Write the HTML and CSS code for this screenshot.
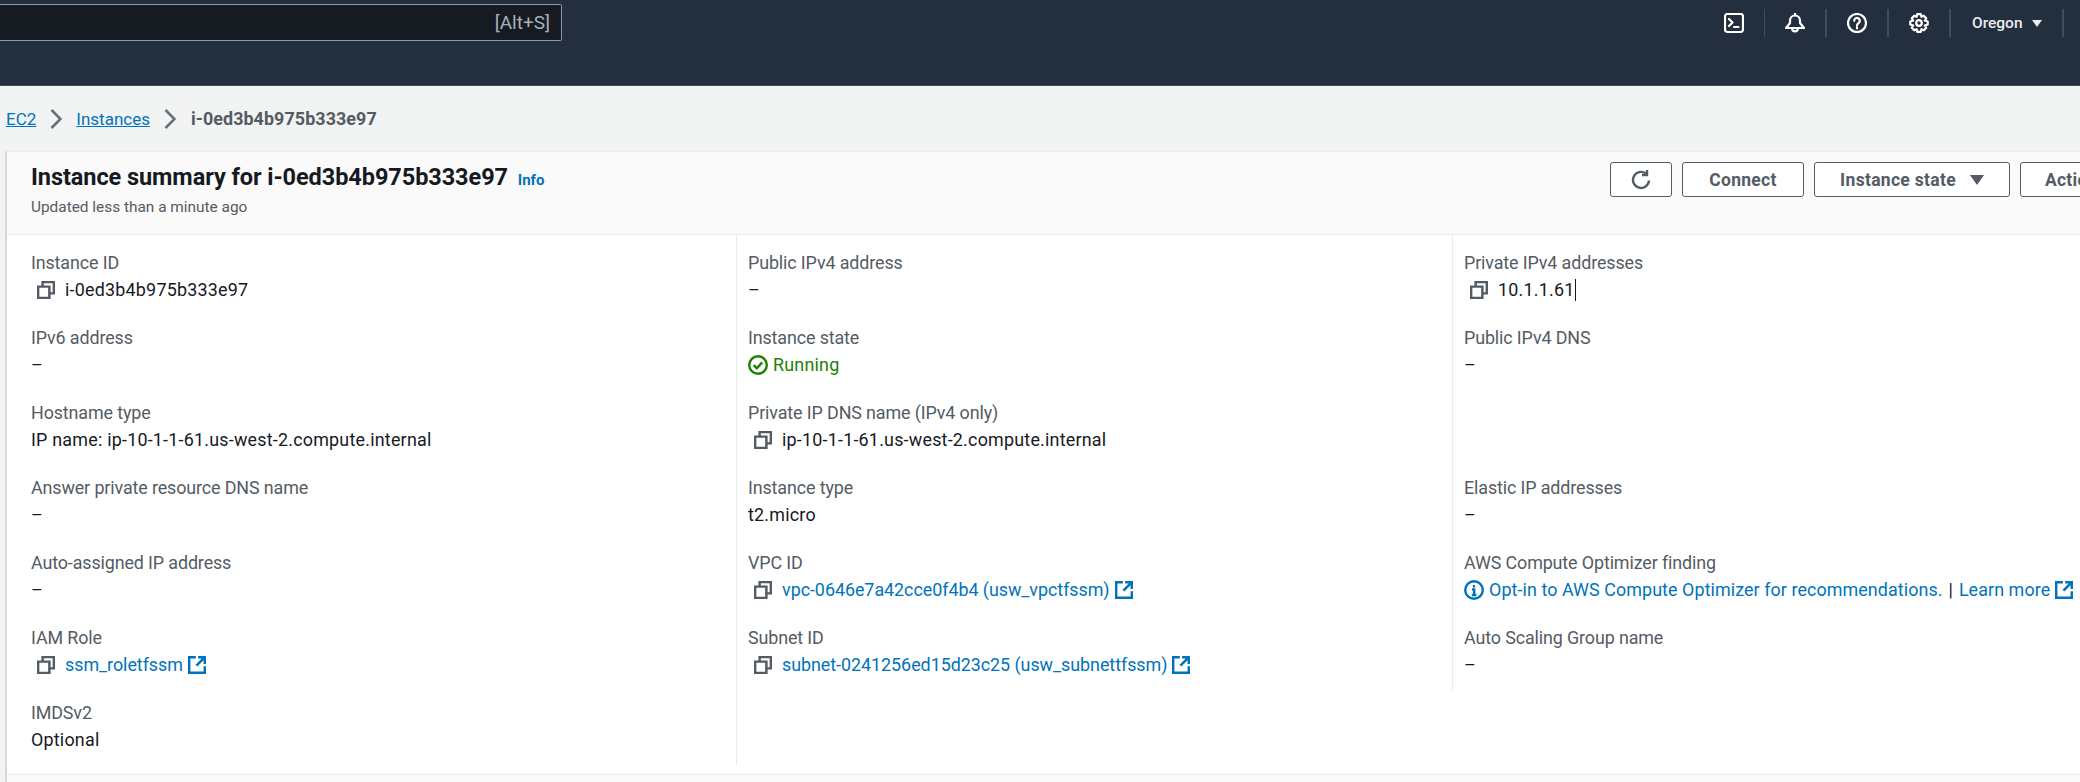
FILE: index.html
```html
<!DOCTYPE html>
<html lang="en">
<head>
<meta charset="UTF-8" />
<title>Instance summary</title>
<link rel="stylesheet" href="styles.css">
</head>
<body>

<header class="topbar">
  <div class="search"><span class="search-key">[Alt+S]</span></div>
  <nav class="topnav">
    <div class="nav-item nav-thin">
      <svg class="nav-icon" viewBox="0 0 20 20"><rect x="1" y="1" width="18" height="18" rx="2.5"/><path d="M5 6l3.5 3.5L5 13M10 14h4.5"/></svg>
    </div>
    <div class="nav-item">
      <svg class="nav-icon" viewBox="0 0 20 20"><path d="M1 15h18l-4-5V7.5a5 5 0 0 0-10 0V10z"/><path d="M10 .8v1.4M7.2 15.5a2.8 2.8 0 0 0 5.6 0"/></svg>
    </div>
    <div class="nav-item">
      <svg class="nav-icon" viewBox="0 0 20 20"><circle cx="10" cy="10" r="9"/><path d="M7.2 7.8a2.8 2.8 0 1 1 4.4 2.3c-1 .7-1.6 1.1-1.6 2.3M10 14.4v1"/></svg>
    </div>
    <div class="nav-item">
      <svg class="nav-icon" viewBox="0 0 20 20"><path d="M8.2 1.2h3.6l.6 2.6 2.4-1.1 2.4 2.6-1.4 2.2 2.9 1v3l-2.9 1 1.4 2.2-2.4 2.6-2.4-1.1-.6 2.6H8.2l-.6-2.6-2.4 1.1-2.4-2.6 1.4-2.2-2.9-1v-3l2.9-1-1.4-2.2 2.4-2.6 2.4 1.1z"/><circle cx="10" cy="10" r="2.8"/></svg>
    </div>
    <div class="nav-item nav-region">Oregon <span class="region-caret"></span></div>
  </nav>
</header>

<div class="crumbs">
  <a href="#">EC2</a>
  <svg class="crumb-sep" viewBox="0 0 12 20"><path d="M1.5 1l9 9-9 9"/></svg>
  <a href="#">Instances</a>
  <svg class="crumb-sep" viewBox="0 0 12 20"><path d="M1.5 1l9 9-9 9"/></svg>
  <span class="crumb-current">i-0ed3b4b975b333e97</span>
</div>

<main class="panel">
  <div class="panel-head">
    <div class="head-text">
      <h1 class="panel-title">Instance summary for i-0ed3b4b975b333e97 <a href="#" class="info">Info</a></h1>
      <div class="updated">Updated less than a minute ago</div>
    </div>
    <div class="actions">
      <button class="btn btn-icon">
        <svg class="refresh" viewBox="0 0 20 20"><path d="M18 10.5a8 8 0 1 1-3.2-7"/><path d="M16 0v5h-5"/></svg>
      </button>
      <button class="btn btn-connect">Connect</button>
      <button class="btn btn-state">Instance state <span class="btn-caret"></span></button>
      <button class="btn btn-actions">Actions</button>
    </div>
  </div>

  <div class="panel-body">
    <section class="col col-first">
      <div class="field">
        <div class="label">Instance ID</div>
        <div class="value copy"><svg class="icon-copy" viewBox="0 0 16 16"><path d="M1 5h10v10H1z"/><path d="M5 5V1h10v10h-4"/></svg>i-0ed3b4b975b333e97</div>
      </div>
      <div class="field">
        <div class="label">IPv6 address</div>
        <div class="value">–</div>
      </div>
      <div class="field">
        <div class="label">Hostname type</div>
        <div class="value">IP name: ip-10-1-1-61.us-west-2.compute.internal</div>
      </div>
      <div class="field">
        <div class="label">Answer private resource DNS name</div>
        <div class="value">–</div>
      </div>
      <div class="field">
        <div class="label">Auto-assigned IP address</div>
        <div class="value">–</div>
      </div>
      <div class="field">
        <div class="label">IAM Role</div>
        <div class="value copy"><svg class="icon-copy" viewBox="0 0 16 16"><path d="M1 5h10v10H1z"/><path d="M5 5V1h10v10h-4"/></svg><a href="#">ssm_roletfssm</a><svg class="icon-ext" viewBox="0 0 16 16"><path d="M7 1H1v14h14V9"/><path d="M9 1h6v6M15 1L7.5 8.5"/></svg></div>
      </div>
      <div class="field">
        <div class="label">IMDSv2</div>
        <div class="value">Optional</div>
      </div>
    </section>

    <section class="col col-second">
      <div class="field">
        <div class="label">Public IPv4 address</div>
        <div class="value">–</div>
      </div>
      <div class="field">
        <div class="label">Instance state</div>
        <div class="value running"><svg class="icon-ok" viewBox="0 0 20 20"><circle cx="10" cy="10" r="8.8"/><path d="M5.8 10.2l3 3 5.4-5.8"/></svg>Running</div>
      </div>
      <div class="field">
        <div class="label">Private IP DNS name (IPv4 only)</div>
        <div class="value copy"><svg class="icon-copy" viewBox="0 0 16 16"><path d="M1 5h10v10H1z"/><path d="M5 5V1h10v10h-4"/></svg>ip-10-1-1-61.us-west-2.compute.internal</div>
      </div>
      <div class="field">
        <div class="label">Instance type</div>
        <div class="value">t2.micro</div>
      </div>
      <div class="field">
        <div class="label">VPC ID</div>
        <div class="value copy"><svg class="icon-copy" viewBox="0 0 16 16"><path d="M1 5h10v10H1z"/><path d="M5 5V1h10v10h-4"/></svg><a href="#">vpc-0646e7a42cce0f4b4 (usw_vpctfssm)</a><svg class="icon-ext" viewBox="0 0 16 16"><path d="M7 1H1v14h14V9"/><path d="M9 1h6v6M15 1L7.5 8.5"/></svg></div>
      </div>
      <div class="field">
        <div class="label">Subnet ID</div>
        <div class="value copy"><svg class="icon-copy" viewBox="0 0 16 16"><path d="M1 5h10v10H1z"/><path d="M5 5V1h10v10h-4"/></svg><a href="#">subnet-0241256ed15d23c25 (usw_subnettfssm)</a><svg class="icon-ext" viewBox="0 0 16 16"><path d="M7 1H1v14h14V9"/><path d="M9 1h6v6M15 1L7.5 8.5"/></svg></div>
      </div>
    </section>

    <section class="col col-third">
      <div class="field">
        <div class="label">Private IPv4 addresses</div>
        <div class="value copy"><svg class="icon-copy" viewBox="0 0 16 16"><path d="M1 5h10v10H1z"/><path d="M5 5V1h10v10h-4"/></svg><span class="text-cursor">10.1.1.61</span></div>
      </div>
      <div class="field">
        <div class="label">Public IPv4 DNS</div>
        <div class="value">–</div>
      </div>
      <div class="field"></div>
      <div class="field">
        <div class="label">Elastic IP addresses</div>
        <div class="value">–</div>
      </div>
      <div class="field">
        <div class="label">AWS Compute Optimizer finding</div>
        <div class="value optimizer"><svg class="icon-info" viewBox="0 0 20 20"><circle cx="10" cy="10" r="8.8"/><path d="M8 9.5h2.2V15M7.8 15h4.6M10 5v2.4"/></svg><a href="#">Opt-in to AWS Compute Optimizer for recommendations.</a> <span class="pipe">|</span> <a href="#">Learn more</a><svg class="icon-ext" viewBox="0 0 16 16"><path d="M7 1H1v14h14V9"/><path d="M9 1h6v6M15 1L7.5 8.5"/></svg></div>
      </div>
      <div class="field">
        <div class="label">Auto Scaling Group name</div>
        <div class="value">–</div>
      </div>
    </section>
  </div>
</main>

</body>
</html>
```

FILE: styles.css
```css
html, body {
  height: 100%;
  overflow: hidden;
}
body {
  margin: 0;
  width: 2080px;
  background: #f2f3f3;
  color: #16191f;
  font-family: "Roboto", "Liberation Sans", sans-serif;
  font-size: 17.9px;
}
a {
  color: #0073bb;
  text-decoration: none;
}

/* top bar */
.topbar {
  display: flex;
  align-items: flex-start;
  height: 85px;
  background: #232f3e;
  border-bottom: 1px solid #414d5c;
}
.search {
  display: flex;
  align-items: center;
  justify-content: flex-end;
  width: 562px;
  height: 37px;
  margin-top: 4px;
  padding-right: 11px;
  box-sizing: border-box;
  background: #161b22;
  border: 1px solid #8d99a8;
  border-left: none;
  border-radius: 0 2px 2px 0;
}
.search-key {
  color: #a6b0bc;
  font-size: 19px;
}
.topnav {
  display: flex;
  align-items: center;
  margin-left: auto;
  margin-top: 9px;
  padding-right: 16px;
}
.nav-item {
  display: flex;
  align-items: center;
  justify-content: center;
  width: 62px;
  height: 28px;
  border-right: 2px solid #414d5c;
  box-sizing: border-box;
}
.nav-thin {
  border-right-width: 1px;
}
.nav-icon {
  width: 20px;
  height: 20px;
  fill: none;
  stroke: #fff;
  stroke-width: 2.2;
  stroke-linejoin: round;
  stroke-linecap: round;
}
.nav-region {
  justify-content: flex-start;
  gap: 9px;
  width: 113px;
  padding-left: 21px;
  color: #eaeded;
  font-size: 15.5px;
  font-weight: 500;
}
.region-caret {
  border-left: 5px solid transparent;
  border-right: 5px solid transparent;
  border-top: 7px solid #eaeded;
}

/* breadcrumbs */
.crumbs {
  display: flex;
  align-items: center;
  gap: 14px;
  height: 65px;
  padding-left: 6px;
}
.crumbs a {
  font-size: 17px;
  text-decoration: underline;
}
.crumb-sep {
  width: 12px;
  height: 20px;
  fill: none;
  stroke: #687078;
  stroke-width: 2.6;
}
.crumb-current {
  margin-left: 1px;
  color: #545b64;
  font-weight: 700;
  letter-spacing: 0.08px;
}

/* panel */
.panel {
  margin-left: 5px;
  width: 2151px;
  height: 632px;
  background: #fafafa;
  border-left: 2px solid #d5dbdb;
  border-top: 1px solid #eaeded;
}
.panel-head {
  display: flex;
  justify-content: space-between;
  height: 83px;
  padding: 10px 26px 0 24px;
  box-sizing: border-box;
  border-bottom: 1px solid #eaeded;
}
.head-text {
  margin-top: -1px;
}
.panel-title {
  margin: 0;
  font-size: 23.5px;
  font-weight: 700;
  letter-spacing: -0.07px;
  line-height: 32px;
}
.info {
  margin-left: 4px;
  font-size: 15px;
  font-weight: 700;
  letter-spacing: 0;
}
.updated {
  margin-top: 2px;
  color: #545b64;
  font-size: 15.4px;
}
.actions {
  display: flex;
  gap: 10px;
}
.btn {
  display: flex;
  align-items: center;
  justify-content: center;
  height: 35px;
  padding: 0;
  background: #fff;
  border: 1px solid #545b64;
  border-radius: 3px;
  color: #545b64;
  font-family: inherit;
  font-size: 17.5px;
  font-weight: 700;
  letter-spacing: 0.3px;
}
.btn-icon {
  width: 62px;
}
.btn-connect {
  width: 122px;
}
.btn-state {
  gap: 14px;
  width: 196px;
}
.btn-actions {
  width: 112px;
}
.btn-caret {
  border-left: 7px solid transparent;
  border-right: 7px solid transparent;
  border-top: 10px solid #545b64;
}
.refresh {
  width: 20px;
  height: 20px;
  fill: none;
  stroke: #545b64;
  stroke-width: 2.4;
}

/* fields */
.panel-body {
  display: grid;
  grid-template-columns: 729px 716px 1fr;
  height: 540px;
  box-sizing: border-box;
  padding-bottom: 10px;
  background: #fff;
  border-bottom: 1px solid #eaeded;
}
.col {
  display: flex;
  flex-direction: column;
  gap: 19px;
  padding: 14px 0 10px 11px;
  border-left: 1px solid #eaeded;
}
.col-first {
  padding-left: 24px;
  border-left: none;
}
.col-third {
  align-self: start;
}
.field {
  height: 56px;
  line-height: 28px;
  white-space: nowrap;
}
.label {
  color: #545b64;
  letter-spacing: -0.12px;
}
.value {
  display: flex;
  align-items: center;
  height: 26px;
  letter-spacing: 0.22px;
}
.value a {
  letter-spacing: -0.04px;
}
.copy {
  padding-left: 6px;
}
.icon-copy {
  flex: none;
  width: 18px;
  height: 18px;
  margin-right: 10px;
  fill: none;
  stroke: #545b64;
  stroke-width: 2.2;
}
.icon-ext {
  flex: none;
  width: 18px;
  height: 18px;
  margin-left: 5px;
  fill: none;
  stroke: #0073bb;
  stroke-width: 2.3;
}
.running {
  color: #1d8102;
}
.icon-ok {
  flex: none;
  width: 20px;
  height: 20px;
  margin-right: 5px;
  fill: none;
  stroke: #1d8102;
  stroke-width: 2.4;
}
.icon-info {
  flex: none;
  width: 20px;
  height: 20px;
  margin-right: 5px;
  fill: none;
  stroke: #0073bb;
  stroke-width: 2.4;
}
.optimizer {
  letter-spacing: 0;
}
.optimizer a {
  letter-spacing: 0.08px;
}
.optimizer .pipe {
  margin: 0 6px;
  color: #16191f;
}
.text-cursor {
  padding-right: 1px;
  border-right: 1px solid #16191f;
  line-height: 22px;
}
```
